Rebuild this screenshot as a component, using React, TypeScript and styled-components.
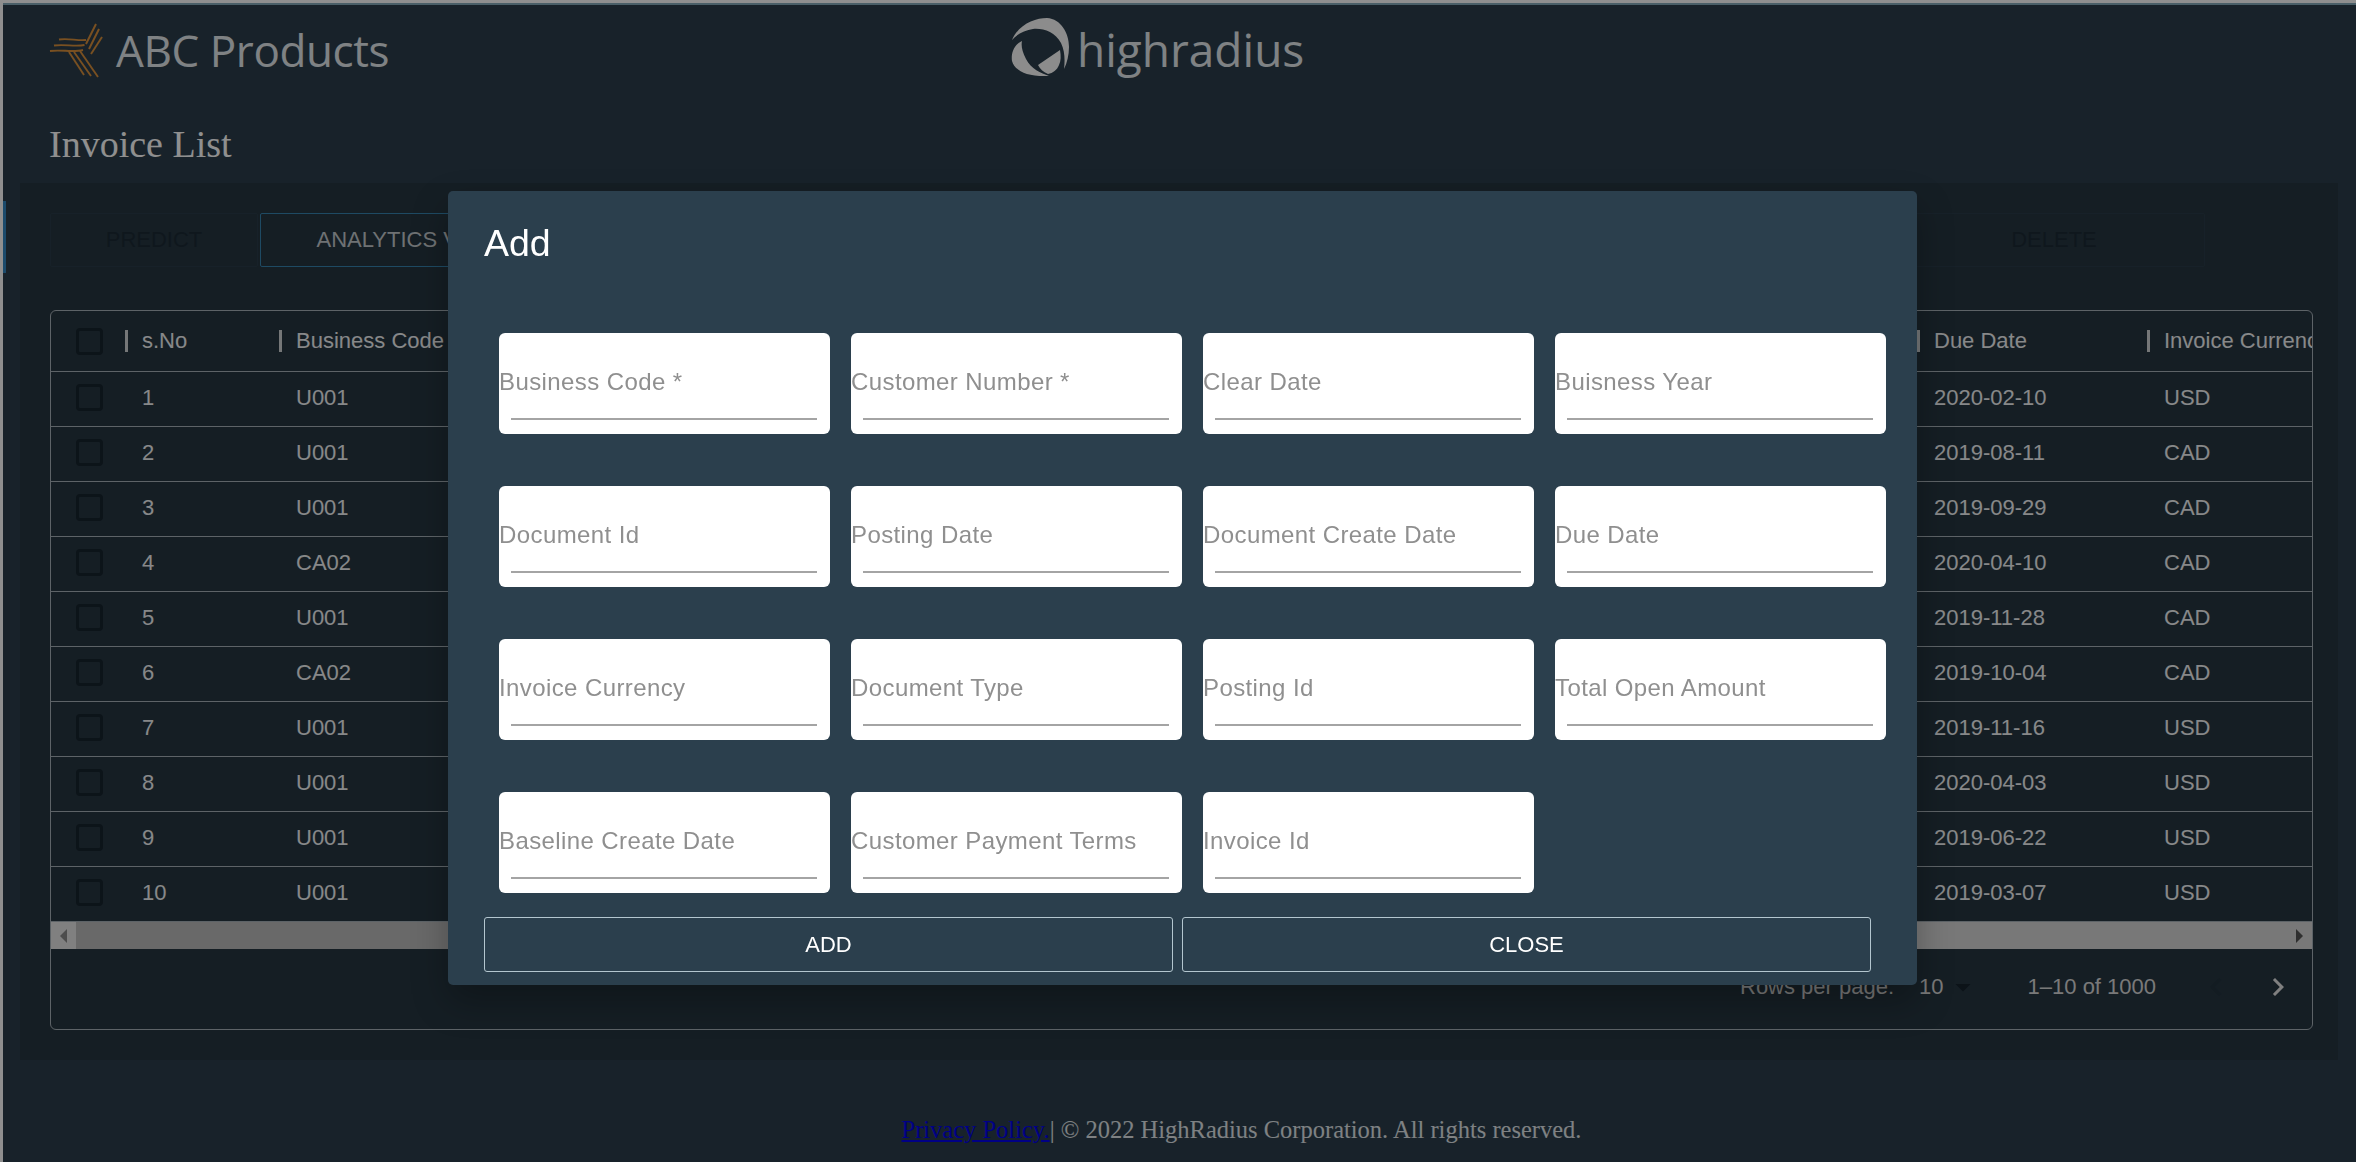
import styled, { createGlobalStyle } from "styled-components";

const GlobalStyle = createGlobalStyle`
    html, body {
        margin: 0;
        padding: 0;
        background-color: #ffffff;
        font-family: "Liberation Sans", Arial, sans-serif;
        overflow: hidden;
    }
    * {
        box-sizing: border-box;
    }
`;

const Page = styled.div`
    position: relative;
    height: 1159px;
    margin: 3px 0 0 3px;
    border-top: 2px solid #84aaba;
    background-color: #2b3e4b;
    overflow: hidden;
`;

const SideMark = styled.div`
    position: absolute;
    left: 0;
    top: 196px;
    width: 3px;
    height: 72px;
    background-color: #3084bf;
`;

const TopBar = styled.header`
    display: flex;
    align-items: center;
    height: 90px;
    padding-left: 46px;
`;

const Brand = styled.div`
    display: flex;
    align-items: center;
    gap: 13px;
    flex: 0 0 956px;
`;

const BrandName = styled.span`
    font-family: "Open Sans", sans-serif;
    font-size: 44px;
    letter-spacing: -0.4px;
    color: #e2e8ec;
`;

const PartnerLogo = styled.div`
    display: flex;
    align-items: center;
    gap: 6px;
`;

const PartnerName = styled.span`
    margin-bottom: 2px;
    font-family: "Open Sans", sans-serif;
    font-weight: 400;
    font-size: 46px;
    color: #e2e8ec;
`;

const PageTitle = styled.h1`
    margin: 26px 0 16px;
    padding-left: 46px;
    font-family: "Liberation Serif", serif;
    font-size: 38px;
    font-weight: 400;
    line-height: 46px;
    color: #ffffff;
`;

const Panel = styled.section`
    height: 877px;
    margin: 0 18px 0 17px;
    padding: 30px 25px 30px 30px;
    background-color: #263641;
`;

const Toolbar = styled.div`
    display: flex;
    align-items: stretch;
    gap: 2px;
    height: 54px;
    margin-bottom: 43px;
`;

const ToolButton = styled.button<{ $width: number; $active?: boolean }>`
    width: ${(p) => p.$width}px;
    padding: 0;
    border: 1px solid ${(p) => (p.$active ? "#3784b1" : "#2a3c49")};
    border-radius: 2px;
    background: transparent;
    font-family: inherit;
    font-size: 22px;
    white-space: nowrap;
    color: ${(p) => (p.$active ? "#c4cacd" : "#1b2a35")};
`;

const ToolSpacer = styled.div`
    flex: 1;
`;

const DeleteButton = styled(ToolButton)`
    margin-right: 108px;
`;

const Table = styled.div`
    height: 720px;
    border: 1px solid #a6b1b8;
    border-radius: 6px;
    overflow: hidden;
    font-size: 22px;
    color: #f0f2f4;
`;

const HeadRow = styled.div`
    display: grid;
    grid-template-columns: 74px 154px 1638px 230px 165px;
    align-items: center;
    height: 61px;
    border-bottom: 1px solid #a6b1b8;
`;

const BodyRow = styled(HeadRow)`
    height: 55px;
    padding-bottom: 3px;
`;

const CheckCell = styled.div`
    padding-left: 25px;
`;

const CheckBox = styled.span`
    display: block;
    width: 27px;
    height: 27px;
    border: 3px solid #17242d;
    border-radius: 4px;
`;

const HeadCell = styled.div`
    display: flex;
    align-items: center;
    overflow: hidden;
    white-space: nowrap;

    &::before {
        content: "";
        flex: 0 0 3px;
        height: 22px;
        margin-right: 14px;
        background-color: #d0d4d6;
    }
`;

const Cell = styled.div`
    padding-left: 17px;
    white-space: nowrap;
`;

const ScrollBar = styled.div`
    display: flex;
    height: 27px;
    background-color: #d6d6d6;
`;

const ScrollArrow = styled.div<{ $side: "left" | "right" }>`
    display: flex;
    align-items: center;
    justify-content: center;
    flex: 0 0 25px;
    background-color: ${(p) => (p.$side === "left" ? "#e4e4e4" : "#d6d6d6")};

    &::after {
        content: "";
        border-top: 7px solid transparent;
        border-bottom: 7px solid transparent;
        ${(p) => (p.$side === "left" ? "border-right: 7px solid #8a8a8a" : "border-left: 7px solid #555555")};
    }
`;

const ScrollTrack = styled.div`
    flex: 1;
`;

const ScrollThumb = styled.div`
    width: 55%;
    height: 100%;
    background-color: #bcbcbc;
`;

const Pagination = styled.div`
    display: flex;
    align-items: center;
    height: 78px;
    padding-bottom: 3px;
    padding-left: 1689px;
`;

const PageText = styled.span`
    white-space: nowrap;
    color: #d8d8d8;
`;

const RowsValue = styled(PageText)`
    margin-left: 25px;
`;

const RangeText = styled(PageText)`
    margin-left: 47px;
`;

const PagerIcon = styled.svg`
    width: 36px;
    height: 36px;
    fill: #e4e4e4;
`;

const SelectIcon = styled(PagerIcon)`
    margin-left: 1px;
    fill: #16222b;
`;

const PrevIcon = styled(PagerIcon)`
    margin-left: 42px;
    fill: #22323e;
`;

const NextIcon = styled(PagerIcon)`
    margin-left: 26px;
`;

const Footer = styled.footer`
    padding: 54px 0 0 124px;
    text-align: center;
    font-family: "Liberation Serif", serif;
    font-size: 24.5px;
    line-height: 32px;
    color: #e0e6ea;

    a {
        color: #0000ee;
    }
`;

const Backdrop = styled.div`
    position: fixed;
    inset: 0;
    background-color: rgba(0, 0, 0, 0.44);
`;

const Dialog = styled.div`
    position: absolute;
    left: 448px;
    top: 191px;
    width: 1469px;
    height: 794px;
    padding: 30px 0 0 36px;
    border-radius: 5px;
    background-color: #2b3f4d;
    box-shadow: 0 16px 36px rgba(0, 0, 0, 0.28);
`;

const DialogTitle = styled.h2`
    margin: 0 0 68px;
    font-size: 37.5px;
    font-weight: 400;
    line-height: 44px;
    color: #ffffff;
`;

const FieldGrid = styled.div`
    display: grid;
    grid-template-columns: repeat(4, 331px);
    grid-auto-rows: 101px;
    column-gap: 21px;
    row-gap: 52px;
    margin-left: 15px;
`;

const Field = styled.div`
    display: flex;
    flex-direction: column;
    padding-top: 35px;
    border-radius: 6px;
    background-color: #ffffff;
`;

const FieldLabel = styled.span`
    font-size: 24px;
    letter-spacing: 0.4px;
    line-height: 28px;
    color: #8f8f8f;
`;

const FieldLine = styled.div`
    height: 2px;
    margin: 22px 13px 0 12px;
    background-color: #a4a4a4;
`;

const DialogActions = styled.div`
    display: grid;
    grid-template-columns: 689px 689px;
    gap: 9px;
    height: 55px;
    margin-top: 24px;
`;

const ActionButton = styled.button`
    border: 1.5px solid #b4c6cf;
    border-radius: 3px;
    background: transparent;
    font-family: inherit;
    font-size: 22px;
    color: #ffffff;
`;

const rows = [
    ["1", "U001", "2020-02-10", "USD"],
    ["2", "U001", "2019-08-11", "CAD"],
    ["3", "U001", "2019-09-29", "CAD"],
    ["4", "CA02", "2020-04-10", "CAD"],
    ["5", "U001", "2019-11-28", "CAD"],
    ["6", "CA02", "2019-10-04", "CAD"],
    ["7", "U001", "2019-11-16", "USD"],
    ["8", "U001", "2020-04-03", "USD"],
    ["9", "U001", "2019-06-22", "USD"],
    ["10", "U001", "2019-03-07", "USD"],
];

const fields = [
    "Business Code *",
    "Customer Number *",
    "Clear Date",
    "Buisness Year",
    "Document Id",
    "Posting Date",
    "Document Create Date",
    "Due Date",
    "Invoice Currency",
    "Document Type",
    "Posting Id",
    "Total Open Amount",
    "Baseline Create Date",
    "Customer Payment Terms",
    "Invoice Id",
];

function AbcLogo() {
    return (
        <svg width="54" height="60" viewBox="8 4 54 60" fill="none" stroke="#d88f3c" strokeWidth="1.9">
            <path d="M18 23.5 C28 22 36 25 45 24" />
            <path d="M13 29.5 C24 28 34 31 43.5 29" />
            <path d="M9 35 C20 33.5 32 36.5 42 34" />
            <path d="M45 28 L55 8" />
            <path d="M48 33 L58 13" />
            <path d="M50 38 L61 21" />
            <path d="M28 36 L43 59" />
            <path d="M33 36 L50 60" />
            <path d="M39 35 L57 61" />
        </svg>
    );
}

function HighRadiusMark() {
    return (
        <svg width="66" height="70" viewBox="0 0 66 70" fill="#fafafa">
            <path d="M7 25 C14 9 30 3 42 3 C56 4 64 18 64 32 C64 40 62 48 59 54 C60 46 60 36 56 28 C50 17 38 13 28 14 C20 15 12 19 7 25 Z" />
            <path d="M17 26 C8 30 6 40 7 46 C10 56 22 62 44 61 C36 58 26 54 21 44 C17 36 16 31 17 26 Z" />
            <path d="M33 50 L55 35 C56 41 56 46 54 50 C52 55 48 58 43 59 C38 57 35 54 33 50 Z" />
        </svg>
    );
}

function App() {
    return (
        <>
            <GlobalStyle />
            <Page>
                <SideMark />
                <TopBar>
                    <Brand>
                        <AbcLogo />
                        <BrandName>ABC Products</BrandName>
                    </Brand>
                    <PartnerLogo>
                        <HighRadiusMark />
                        <PartnerName>highradius</PartnerName>
                    </PartnerLogo>
                </TopBar>
                <PageTitle>Invoice List</PageTitle>
                <Panel>
                    <Toolbar>
                        <ToolButton $width={208}>PREDICT</ToolButton>
                        <ToolButton $width={296} $active>
                            ANALYTICS VIEW
                        </ToolButton>
                        <ToolSpacer />
                        <DeleteButton $width={302}>DELETE</DeleteButton>
                    </Toolbar>
                    <Table>
                        <HeadRow>
                            <CheckCell>
                                <CheckBox />
                            </CheckCell>
                            <HeadCell>s.No</HeadCell>
                            <HeadCell>Business Code</HeadCell>
                            <HeadCell>Due Date</HeadCell>
                            <HeadCell>Invoice Currency</HeadCell>
                        </HeadRow>
                        {rows.map((row) => (
                            <BodyRow key={row[0]}>
                                <CheckCell>
                                    <CheckBox />
                                </CheckCell>
                                {row.map((value) => (
                                    <Cell key={value}>{value}</Cell>
                                ))}
                            </BodyRow>
                        ))}
                        <ScrollBar>
                            <ScrollArrow $side="left" />
                            <ScrollTrack>
                                <ScrollThumb />
                            </ScrollTrack>
                            <ScrollArrow $side="right" />
                        </ScrollBar>
                        <Pagination>
                            <PageText>Rows per page:</PageText>
                            <RowsValue>10</RowsValue>
                            <SelectIcon viewBox="0 0 24 24">
                                <path d="M7 10l5 5 5-5z" />
                            </SelectIcon>
                            <RangeText>1–10 of 1000</RangeText>
                            <PrevIcon viewBox="0 0 24 24">
                                <path d="M15.41 7.41 14 6l-6 6 6 6 1.41-1.41L10.83 12z" />
                            </PrevIcon>
                            <NextIcon viewBox="0 0 24 24">
                                <path d="M10 6 8.59 7.41 13.17 12l-4.58 4.59L10 18l6-6z" />
                            </NextIcon>
                        </Pagination>
                    </Table>
                </Panel>
                <Footer>
                    <a href="#privacy">Privacy Policy.</a>| © 2022 HighRadius Corporation. All rights reserved.
                </Footer>
            </Page>
            <Backdrop />
            <Dialog>
                <DialogTitle>Add</DialogTitle>
                <FieldGrid>
                    {fields.map((label) => (
                        <Field key={label}>
                            <FieldLabel>{label}</FieldLabel>
                            <FieldLine />
                        </Field>
                    ))}
                </FieldGrid>
                <DialogActions>
                    <ActionButton>ADD</ActionButton>
                    <ActionButton>CLOSE</ActionButton>
                </DialogActions>
            </Dialog>
        </>
    );
}

export default App;
